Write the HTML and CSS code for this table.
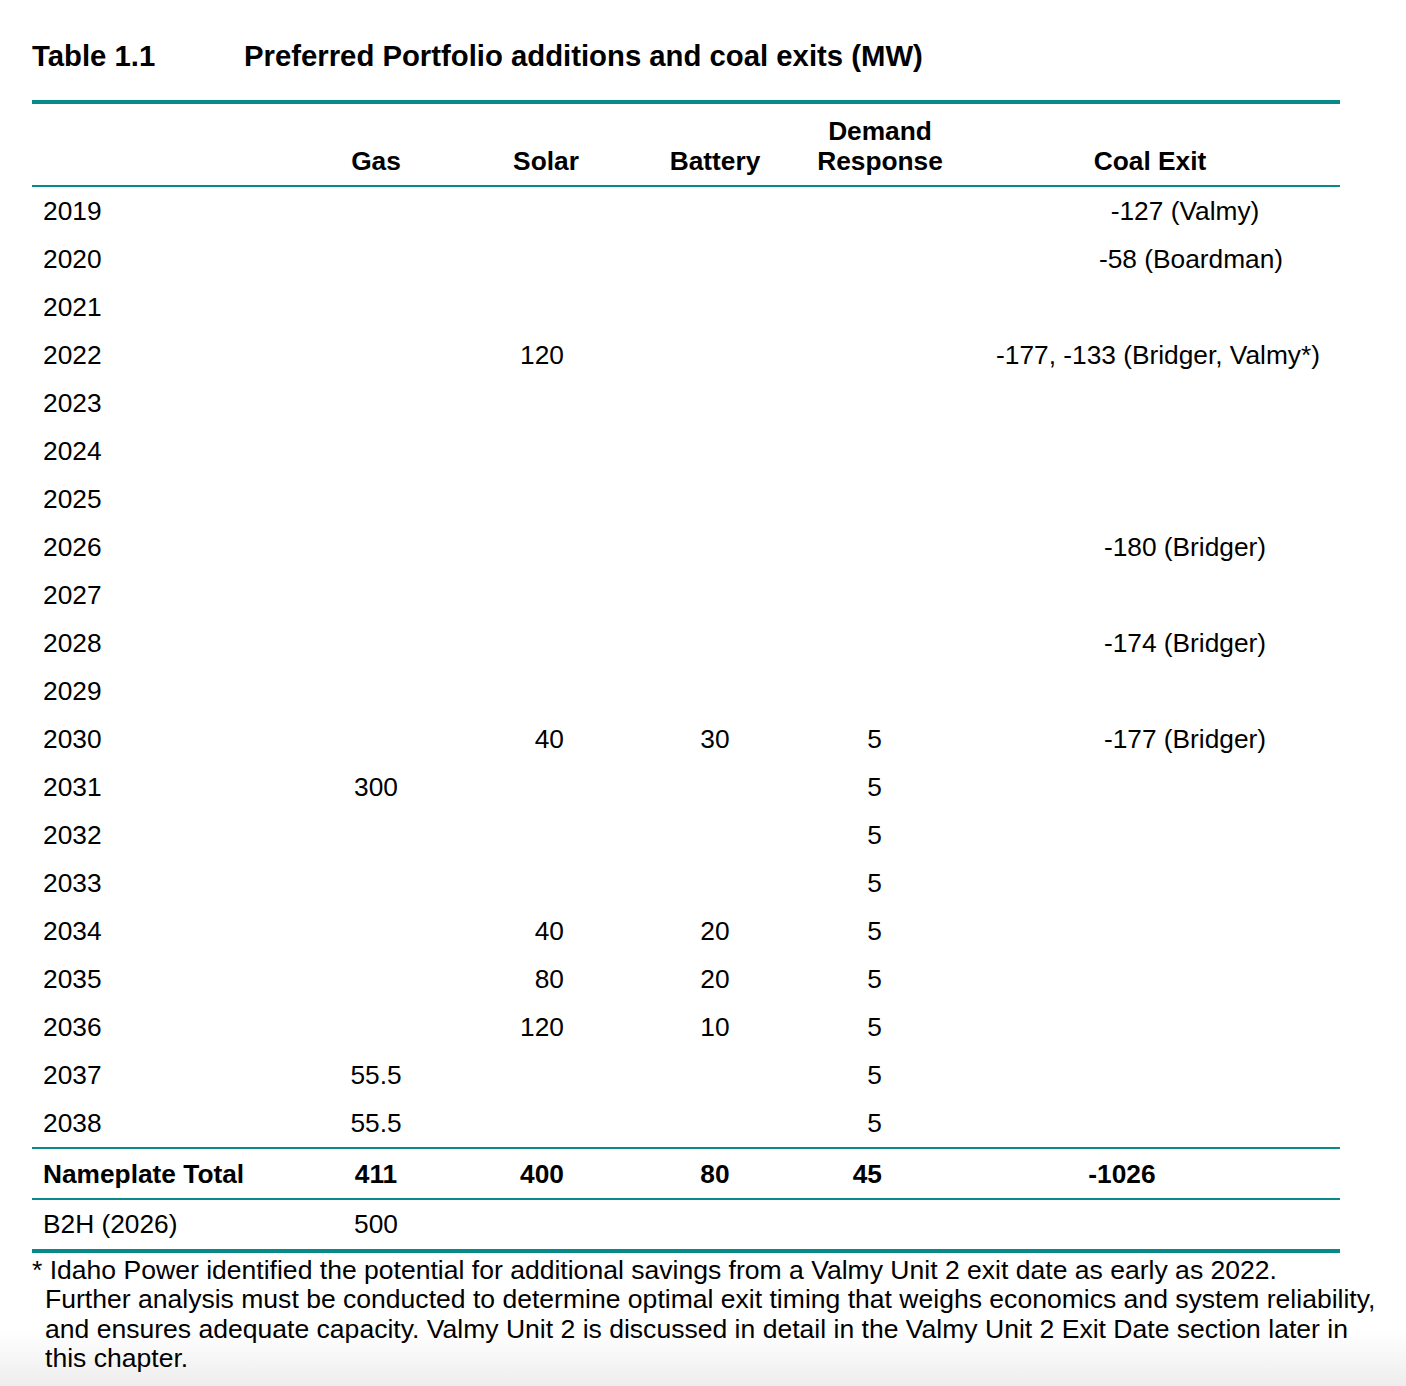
FILE: index.html
```html
<!DOCTYPE html>
<html lang="en">
<head>
    <meta charset="UTF-8">
    <title>Table 1.1 Preferred Portfolio additions and coal exits (MW)</title>
    <link rel="stylesheet" href="styles.css">
</head>
<body>
    <div class="page">
        <div class="caption">
            <span class="num">Table 1.1</span>
            <span class="title">Preferred Portfolio additions and coal exits (MW)</span>
        </div>

        <table class="portfolio">
            <colgroup>
                <col class="c-year">
                <col class="c-gas">
                <col class="c-solar">
                <col class="c-battery">
                <col class="c-demand">
                <col class="c-coal">
            </colgroup>
            <thead>
                <tr>
                    <th></th>
                    <th>Gas</th>
                    <th>Solar</th>
                    <th>Battery</th>
                    <th>Demand<br>Response</th>
                    <th class="coal">Coal Exit</th>
                </tr>
            </thead>
            <tbody>
                <tr><td>2019</td><td></td><td></td><td></td><td></td><td class="coal">-127 (Valmy)</td></tr>
                <tr><td>2020</td><td></td><td></td><td></td><td></td><td class="coal wide">-58 (Boardman)</td></tr>
                <tr><td>2021</td><td></td><td></td><td></td><td></td><td class="coal"></td></tr>
                <tr><td>2022</td><td></td><td class="solar">120</td><td></td><td></td><td class="coal long">-177, -133 (Bridger, Valmy*)</td></tr>
                <tr><td>2023</td><td></td><td></td><td></td><td></td><td class="coal"></td></tr>
                <tr><td>2024</td><td></td><td></td><td></td><td></td><td class="coal"></td></tr>
                <tr><td>2025</td><td></td><td></td><td></td><td></td><td class="coal"></td></tr>
                <tr><td>2026</td><td></td><td></td><td></td><td></td><td class="coal">-180 (Bridger)</td></tr>
                <tr><td>2027</td><td></td><td></td><td></td><td></td><td class="coal"></td></tr>
                <tr><td>2028</td><td></td><td></td><td></td><td></td><td class="coal">-174 (Bridger)</td></tr>
                <tr><td>2029</td><td></td><td></td><td></td><td></td><td class="coal"></td></tr>
                <tr><td>2030</td><td></td><td class="solar">40</td><td>30</td><td class="demand">5</td><td class="coal">-177 (Bridger)</td></tr>
                <tr><td>2031</td><td>300</td><td></td><td></td><td class="demand">5</td><td class="coal"></td></tr>
                <tr><td>2032</td><td></td><td></td><td></td><td class="demand">5</td><td class="coal"></td></tr>
                <tr><td>2033</td><td></td><td></td><td></td><td class="demand">5</td><td class="coal"></td></tr>
                <tr><td>2034</td><td></td><td class="solar">40</td><td>20</td><td class="demand">5</td><td class="coal"></td></tr>
                <tr><td>2035</td><td></td><td class="solar">80</td><td>20</td><td class="demand">5</td><td class="coal"></td></tr>
                <tr><td>2036</td><td></td><td class="solar">120</td><td>10</td><td class="demand">5</td><td class="coal"></td></tr>
                <tr><td>2037</td><td>55.5</td><td></td><td></td><td class="demand">5</td><td class="coal"></td></tr>
                <tr><td>2038</td><td>55.5</td><td></td><td></td><td class="demand">5</td><td class="coal"></td></tr>
                <tr class="total">
                    <td>Nameplate Total</td>
                    <td>411</td>
                    <td class="solar">400</td>
                    <td>80</td>
                    <td class="demand">45</td>
                    <td class="coal sum">-1026</td>
                </tr>
                <tr class="last">
                    <td>B2H (2026)</td>
                    <td>500</td>
                    <td></td><td></td><td></td><td></td>
                </tr>
            </tbody>
        </table>

        <p class="note">* Idaho Power identified the potential for additional savings from a Valmy Unit 2 exit date as early as 2022.<br>Further analysis must be conducted to determine optimal exit timing that weighs economics and system reliability, and ensures adequate capacity. Valmy Unit 2 is discussed in detail in the Valmy Unit 2 Exit Date section later in this chapter.</p>
    </div>
</body>
</html>
```

FILE: styles.css
```css
html {
    height: 100%;
    background: linear-gradient(to bottom, #ffffff 0, #ffffff calc(100% - 56px), #ededed 100%);
}
body {
    margin: 0;
    font-family: "Liberation Sans", Arial, sans-serif;
    color: #000;
}
.page {
    width: 1308px;
    padding: 40px 0 0 32px;
}
.caption {
    display: flex;
    font-size: 29.3px;
    font-weight: bold;
    line-height: 32px;
    margin-bottom: 28px;
}
.caption .num {
    width: 212px;
}
.portfolio {
    width: 1308px;
    border-collapse: separate;
    border-spacing: 0;
    table-layout: fixed;
    font-size: 26.3px;
}
.c-year { width: 274px; }
.c-gas { width: 140px; }
.c-solar { width: 200px; }
.c-battery { width: 138px; }
.c-demand { width: 192px; }
.c-coal { width: 364px; }
.portfolio th {
    font-weight: bold;
    line-height: 30px;
    padding: 12px 0 9px;
    vertical-align: bottom;
    text-align: center;
    border-top: 4px solid #088a8b;
    border-bottom: 2px solid #088a8b;
}
.portfolio th.coal {
    padding-right: 16px;
}
.portfolio td {
    height: 48px;
    line-height: 48px;
    padding: 0;
    text-align: center;
    white-space: nowrap;
}
.portfolio td:first-child {
    text-align: left;
    padding-left: 11px;
}
.portfolio td.solar {
    text-align: right;
    padding-right: 82px;
}
.portfolio td.demand {
    text-align: right;
    padding-right: 94px;
}
.portfolio td.coal {
    padding-left: 54px;
}
.portfolio td.wide {
    padding-left: 66px;
}
.portfolio td.long {
    padding-left: 0;
}
.portfolio td.sum {
    padding-left: 0;
    padding-right: 72px;
}
.portfolio .total td {
    font-weight: bold;
    height: 47px;
    line-height: 47px;
    padding-top: 2px;
    border-top: 2px solid #088a8b;
    border-bottom: 2px solid #088a8b;
}
.portfolio .total td:first-child {
    padding-left: 11px;
}
.portfolio .last td {
    height: 49px;
    line-height: 49px;
    border-bottom: 4px solid #088a8b;
}
.note {
    width: 1350px;
    margin: 3px 0 0;
    font-size: 26.55px;
    line-height: 29.4px;
    padding-left: 13px;
    text-indent: -13px;
}
```
